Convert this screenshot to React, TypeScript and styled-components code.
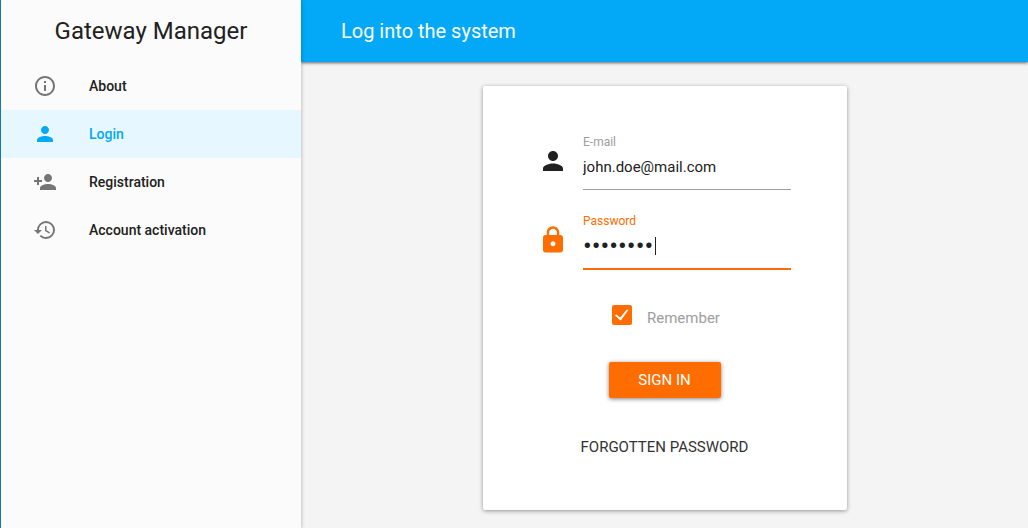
import React, { useState } from 'react';
import styled, { createGlobalStyle } from 'styled-components';
import { MdHistory, MdInfoOutline, MdLock, MdPerson, MdPersonAdd } from 'react-icons/md';

const GlobalStyle = createGlobalStyle`
  *, *::before, *::after { box-sizing: border-box; }
  body {
    margin: 0;
    background: #f4f4f4;
    color: #212121;
    font-family: Roboto, "Liberation Sans", sans-serif;
  }
`;

const Shell = styled.div`
  display: flex;
  min-height: 100vh;
  border-left: 1px solid #1883d7;
`;

const Sidebar = styled.aside`
  position: relative;
  z-index: 1;
  flex: 0 0 300px;
  background: #fbfbfb;
  box-shadow: 0 0 4px rgba(0, 0, 0, 0.3);
`;

const Brand = styled.h1`
  margin: 0;
  font-size: 24px;
  font-weight: 400;
  line-height: 62px;
  text-align: center;
`;

const NavItem = styled.a<{ $active?: boolean }>`
  display: flex;
  align-items: center;
  gap: 32px;
  height: 48px;
  padding: 0 32px;
  background: ${(p) => (p.$active ? '#e6f7ff' : 'transparent')};
  color: ${(p) => (p.$active ? '#03a9f4' : '#212121')};
  font-size: 14px;
  font-weight: 500;
  text-decoration: none;

  svg {
    color: ${(p) => (p.$active ? '#03a9f4' : '#757575')};
  }
`;

const Main = styled.main`
  flex: 1;
  min-width: 0;
`;

const TopBar = styled.header`
  padding: 0 40px;
  background: #03a9f7;
  box-shadow: 0 1px 3px rgba(0, 0, 0, 0.6);
`;

const PageTitle = styled.h2`
  margin: 0;
  color: #fff;
  font-size: 20px;
  font-weight: 400;
  line-height: 62px;
`;

const Content = styled.div`
  display: flex;
  justify-content: center;
  padding: 24px 16px 18px 17px;
`;

const Card = styled.form`
  display: flex;
  flex-direction: column;
  align-items: center;
  width: 364px;
  padding: 48px 56px 52px 55px;
  border-radius: 2px;
  background: #fff;
  box-shadow: 0 1px 4px rgba(0, 0, 0, 0.4);
`;

const FieldRow = styled.div<{ $focused?: boolean }>`
  display: flex;
  align-items: flex-start;
  gap: 15px;
  width: 100%;
  height: 56px;
  margin-bottom: 23px;
  color: ${(p) => (p.$focused ? '#ff6d00' : '#212121')};

  svg {
    flex: none;
    margin-top: 12px;
  }
`;

const Field = styled.div`
  position: relative;
  display: flex;
  flex: 1;
  flex-direction: column;
  min-width: 0;
`;

const FieldLabel = styled.label<{ $focused?: boolean }>`
  color: ${(p) => (p.$focused ? '#ff6d00' : '#9e9e9e')};
  font-size: 12px;
  line-height: 16px;
`;

const TextInput = styled.input<{ $focused?: boolean }>`
  width: 100%;
  height: ${(p) => (p.$focused ? 41 : 40)}px;
  padding: 0 0 5px;
  border: 0;
  border-bottom: ${(p) => (p.$focused ? '2px solid #ff6d00' : '1px solid #9e9e9e')};
  outline: 0;
  background: transparent;
  color: #212121;
  caret-color: transparent;
  font-family: inherit;
  font-size: 15px;

  &[type='password'] {
    font-size: 26px;
  }
`;

const Caret = styled.span`
  position: absolute;
  top: 24px;
  left: 72px;
  width: 1px;
  height: 18px;
  background: #212121;
`;

const CheckRow = styled.label`
  display: flex;
  gap: 15px;
  width: 105px;
  height: 26px;
  margin-top: 13px;
  color: #9e9e9e;
  font-size: 15px;
  line-height: 26px;
`;

const CheckMark = styled.span`
  position: relative;
  flex: none;
  width: 20px;
  height: 20px;

  svg {
    position: absolute;
    inset: 0;
    pointer-events: none;
  }
`;

const Checkbox = styled.input`
  display: block;
  width: 20px;
  height: 20px;
  margin: 0;
  border: 2px solid #ff6d00;
  border-radius: 2px;
  appearance: none;

  &:checked { background: #ff6d00; }
`;

const SignInButton = styled.button`
  width: 112px;
  height: 36px;
  margin-top: 31px;
  border: 0;
  border-radius: 2px;
  background: #ff6d00;
  box-shadow: 0 1px 4px rgba(0, 0, 0, 0.5);
  color: #fff;
  font-family: inherit;
  font-size: 15px;
`;

const ForgottenLink = styled.a`
  margin-top: 38px;
  color: #333;
  font-size: 15px;
  line-height: 22px;
  text-decoration: none;
  white-space: nowrap;
`;

const navigation = [
  { label: 'About', href: '#about', Icon: MdInfoOutline },
  { label: 'Login', href: '#login', Icon: MdPerson, active: true },
  { label: 'Registration', href: '#registration', Icon: MdPersonAdd },
  { label: 'Account activation', href: '#activation', Icon: MdHistory },
];

export default function App() {
  const [email, setEmail] = useState('john.doe@mail.com');
  const [password, setPassword] = useState('password');
  const [remember, setRemember] = useState(true);

  return (
    <>
      <GlobalStyle />
      <Shell>
        <Sidebar>
          <Brand>Gateway Manager</Brand>
          <nav>
            {navigation.map(({ label, href, Icon, active }) => (
              <NavItem key={label} href={href} $active={active}>
                <Icon size={24} />
                {label}
              </NavItem>
            ))}
          </nav>
        </Sidebar>
        <Main>
          <TopBar>
            <PageTitle>Log into the system</PageTitle>
          </TopBar>
          <Content>
            <Card onSubmit={(e) => e.preventDefault()}>
              <FieldRow>
                <MdPerson size={30} />
                <Field>
                  <FieldLabel htmlFor="email">E-mail</FieldLabel>
                  <TextInput id="email" type="email" value={email} onChange={(e) => setEmail(e.target.value)} />
                </Field>
              </FieldRow>
              <FieldRow $focused>
                <MdLock size={30} />
                <Field>
                  <FieldLabel htmlFor="password" $focused>Password</FieldLabel>
                  <TextInput
                    id="password"
                    type="password"
                    $focused
                    value={password}
                    onChange={(e) => setPassword(e.target.value)}
                  />
                  <Caret />
                </Field>
              </FieldRow>
              <CheckRow>
                <CheckMark>
                  <Checkbox type="checkbox" checked={remember} onChange={(e) => setRemember(e.target.checked)} />
                  {remember && (
                    <svg width="20" height="20" viewBox="0 0 20 20" fill="#fff">
                      <path d="M3 10.6 4.4 9.4 8.2 12.4 14.6 4.8 16.6 4.8 9 15.2 8 15.2Z" />
                    </svg>
                  )}
                </CheckMark>
                Remember
              </CheckRow>
              <SignInButton type="submit">SIGN IN</SignInButton>
              <ForgottenLink href="#forgotten">FORGOTTEN PASSWORD</ForgottenLink>
            </Card>
          </Content>
        </Main>
      </Shell>
    </>
  );
}
